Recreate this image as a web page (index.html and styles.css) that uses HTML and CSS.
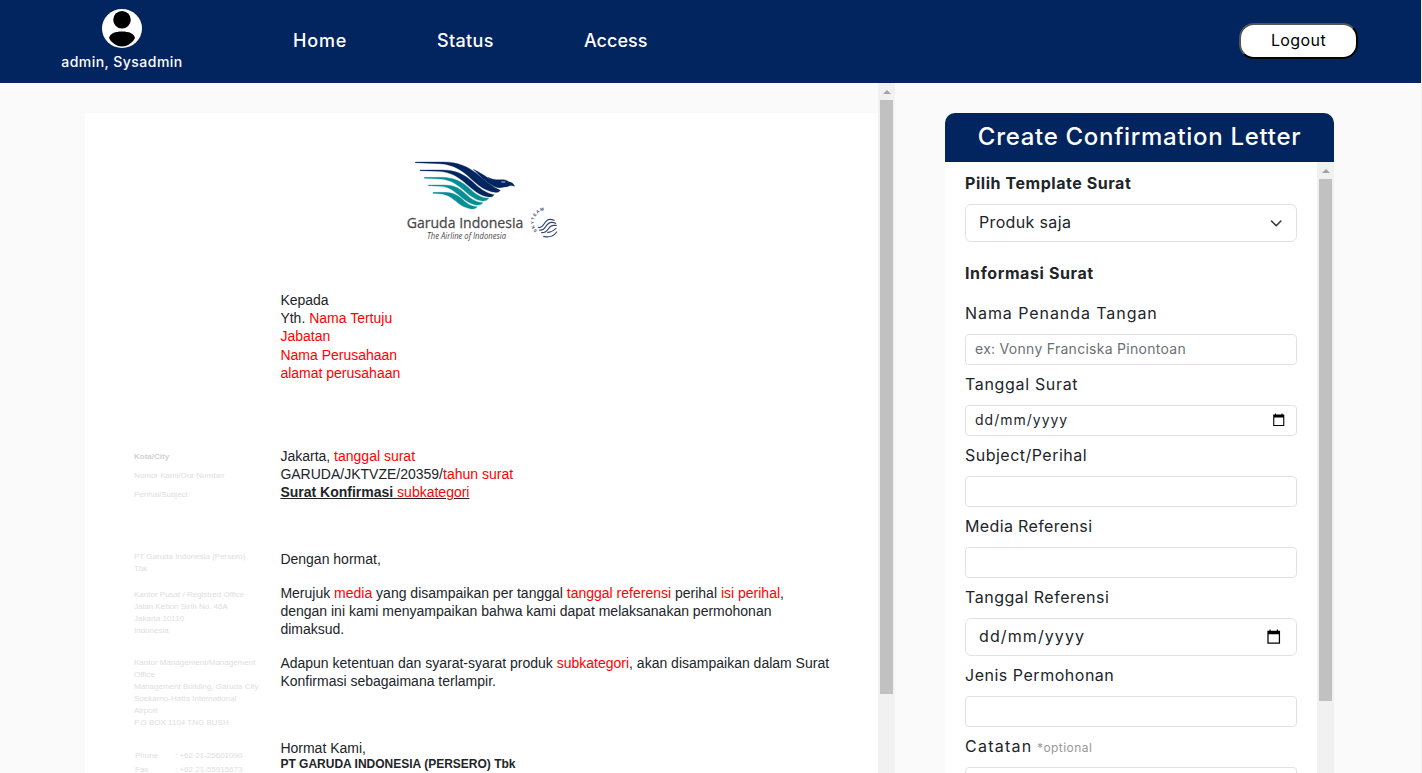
FILE: index.html
```html
<!DOCTYPE html>
<html lang="id">
<head>
<meta charset="utf-8">
<title>Create Confirmation Letter</title>
<link rel="stylesheet" href="styles.css">
</head>
<body>
<header class="navbar">
  <div class="user">
    <svg class="avatar" width="40" height="40" viewBox="0 0 40 40"><ellipse cx="20" cy="19.500" rx="20" ry="19.500" fill="#fff"/><circle cx="20" cy="10.700" r="8.800"/><path d="M7 29C8 24.500 13 22.500 20 22.500s12 2 13 6.500C30 34.500 25 37.500 20 37.500S10 34.500 7 29Z"/></svg>
    <span class="user-name">admin, Sysadmin</span>
  </div>
  <nav class="links"><a class="l-home">Home</a><a class="l-status">Status</a><a class="l-access">Access</a></nav>
  <button class="logout">Logout</button>
</header>
<main class="content">
  <section class="preview">
    <article class="paper">
      <svg class="logo" width="175" height="100" viewBox="0 0 525 300">
        <g transform="translate(45 16)">
          <g fill="#02245f" stroke="#02245f" stroke-linejoin="round">
            <path d="M16 20H100C143 20 174 34 199 54C225 76 247 95 271 105Q267 113 255 111C226 107 203 89 183 70C158 46 133 28 90 25L16 22Z"/>
            <path d="M30 44H95C138 44 163 58 185 77C207 98 227 114 252 118Q249 127 236 125C208 121 188 102 169 86C148 67 125 51 88 48L30 46Z"/>
            <path d="M190 42C210 52 228 63 246 77Q264 90 286 92Q278 99 264 97C235 90 215 66 190 42Z"/>
            <path d="M234 66Q244 72 257 73H281Q292 74 296 79Q309 80 314 93L307 91Q300 90 292 94Q279 97 265 93Q248 84 234 66Z"/>
          </g>
          <g fill="#078e94" stroke="#078e94" stroke-linejoin="round">
            <path d="M43 66H95C133 67 155 79 176 97C197 117 212 127 236 129Q230 139 217 137C193 134 176 117 158 102C136 83 118 73 90 71L43 69Z"/>
            <path d="M55 89H100C133 89 148 99 166 115C184 132 200 141 219 142Q213 151 200 149C176 146 160 130 146 119C126 102 112 95 95 93L55 91Z"/>
            <path d="M69 111H105C133 112 145 122 159 133C174 147 184 153 202 154Q195 163 181 160C160 157 148 146 134 135C118 122 108 118 95 116L69 114Z"/>
          </g>
          <path d="M274 80h12" stroke="#b8c2d4" stroke-width="3"/>
        </g>
        <text x="35" y="234" class="brand" textLength="350" lengthAdjust="spacingAndGlyphs">Garuda Indonesia</text>
        <text x="96" y="266" class="tagline" textLength="237" lengthAdjust="spacingAndGlyphs">The Airline of Indonesia</text>
        <path id="arc" d="M427 243A32 32 0 0 1 480 192" fill="none"/>
        <text class="skyteam"><textPath href="#arc" textLength="80">SKYTEAM</textPath></text>
        <g fill="none" stroke="#34466f" stroke-width="3.500" stroke-linecap="round">
          <path d="M430 232C447 238 447 208 464 208Q472 208 477 211"/>
          <path d="M433 240C454 245 450 217 470 217Q477 217 482 220"/>
          <path d="M440 248C462 250 457 226 476 226H484"/>
          <path d="M446 259Q470 266 485 246"/>
          <path d="M458 247Q470 247 483 235"/>
        </g>
      </svg>
      <div class="letter">
        <aside class="side">
          <div class="meta"><b>Kota/City</b><span>Nomor Kami/Our Number</span><span>Perihal/Subject</span></div>
          <p class="company">PT Garuda Indonesia (Persero)<br>Tbk</p>
          <p class="office">Kantor Pusat / Registred Office<br>Jalan Kebon Sirih No. 46A<br>Jakarta 10110<br>Indonesia</p>
          <p class="management">Kantor Management/Management<br>Office<br>Management Building, Garuda City<br>Soekarno-Hatta International<br>Airport<br>P.O BOX 1104 TNG BUSH</p>
          <div class="phones"><span>Phone</span><span>: +62 21-25601090</span><span>Fax</span><span>: +62 21-55915673</span></div>
        </aside>
        <div class="body">
          <p class="recipient">Kepada<br>Yth. <i>Nama Tertuju</i><br><i>Jabatan</i><br><i>Nama Perusahaan</i><br><i>alamat perusahaan</i></p>
          <p class="subject">Jakarta, <i>tanggal surat</i><br>GARUDA/JKTVZE/20359/<i>tahun surat</i><br><u><b>Surat Konfirmasi </b><i>subkategori</i></u></p>
          <p class="greeting">Dengan hormat,</p>
          <p class="para">Merujuk <i>media</i> yang disampaikan per tanggal <i>tanggal referensi</i> perihal <i>isi perihal</i>,<br>dengan ini kami menyampaikan bahwa kami dapat melaksanakan permohonan<br>dimaksud.</p>
          <p class="para">Adapun ketentuan dan syarat-syarat produk <i>subkategori</i>, akan disampaikan dalam Surat<br>Konfirmasi sebagaimana terlampir.</p>
          <p class="closing">Hormat Kami,<br><b class="signer">PT GARUDA INDONESIA (PERSERO) Tbk</b></p>
        </div>
      </div>
    </article>
    <div class="scrollbar"><span class="arrow"></span><span class="thumb thumb-preview"></span></div>
  </section>
  <section class="card">
    <h1 class="card-title"><span>Create Confirmation Letter</span></h1>
    <div class="card-body">
      <form class="form">
        <h2 class="h-template">Pilih Template Surat</h2>
        <div class="control large select"><span class="t-select">Produk saja</span><svg width="16" height="16" viewBox="0 0 16 16"><path d="M3.500 6l4.700 4.700 4.700-4.700" fill="none" stroke="#343a40" stroke-width="1.600" stroke-linecap="round" stroke-linejoin="round"/></svg></div>
        <h2 class="h-info">Informasi Surat</h2>
        <label class="t-signer">Nama Penanda Tangan</label>
        <div class="control"><span class="placeholder">ex: Vonny Franciska Pinontoan</span></div>
        <label class="t-date">Tanggal Surat</label>
        <div class="control"><span class="date-small">dd/mm/yyyy</span><svg width="14" height="14" viewBox="0 0 14 14"><path d="M3 .5h1v1h5.500v-1h1v1h1.800v11.500H1.200V1.500H3ZM2.300 4.500v7.400h8.900V4.500Z" fill-rule="evenodd"/></svg></div>
        <label class="t-subject">Subject/Perihal</label>
        <div class="control"></div>
        <label class="t-media">Media Referensi</label>
        <div class="control"></div>
        <label class="t-ref">Tanggal Referensi</label>
        <div class="control large"><span class="date-large">dd/mm/yyyy</span><svg width="16" height="16" viewBox="0 0 14 14"><path d="M3 .5h1v1h5.500v-1h1v1h1.800v11.500H1.200V1.500H3ZM2.300 4.500v7.400h8.900V4.500Z" fill-rule="evenodd"/></svg></div>
        <label class="t-type">Jenis Permohonan</label>
        <div class="control"></div>
        <label class="t-note"><span>Catatan</span> <small>*optional</small></label>
        <div class="control"></div>
      </form>
      <div class="scrollbar"><span class="arrow"></span><span class="thumb thumb-form"></span></div>
    </div>
  </section>
</main>
</body>
</html>
```
FILE: styles.css
```css
* { box-sizing: border-box; }
body { margin: 0; height: 773px; overflow: hidden; background: #fafafa; color: #212529; font: 16px/24px Inter, sans-serif; border-right: 1px solid #f0f0f0; }
p, h1, h2 { margin: 0; }
.navbar { height: 83px; background: #02245f; color: #fff; display: flex; align-items: center; padding: 0 64px 0 61px; }
.user { width: 122px; height: 83px; padding-top: 9px; display: flex; flex-direction: column; align-items: center; }
.avatar { flex: none; }
.user-name { font-size: 14px; line-height: 22px; margin-top: 2px; font-weight: 500; white-space: nowrap; letter-spacing: .46px; }
.links { display: flex; gap: 90px; margin-left: 110px; font-size: 18px; font-weight: 500; position: relative; top: -1px; }
.l-home { width: 54px; letter-spacing: .8px; }
.l-status { width: 57px; letter-spacing: .35px; }
.logout { margin: -2px -1px 0 auto; width: 119px; height: 36px; border: 2px outset #000; border-radius: 15px; background: #fff; color: #000; font: 16px Inter, sans-serif; letter-spacing: .4px; padding: 0 0 2px; }
.content { display: flex; height: 690px; }
.preview { width: 895px; display: flex; justify-content: flex-end; overflow: hidden; }
.paper { width: 793px; height: 690px; margin-top: 30px; background: #fff; }
.logo { display: block; margin: 37px 0 0 310px; }
.brand { font: 46px "Open Sans", sans-serif; fill: #4b4749; stroke: #4b4749; stroke-width: .8px; }
.tagline { font: italic 25px "Open Sans", sans-serif; fill: #4b4749; }
.skyteam { font: bold 13px "Liberation Sans", sans-serif; fill: #34466f; }
.scrollbar { width: 17px; flex: none; background: #f1f1f1; display: flex; flex-direction: column; align-items: center; }
.arrow { border: 4px solid transparent; border-top: 0; border-bottom: 4px solid #a3a3a3; margin: 7px 0 6px; }
.thumb { width: 13px; background: #c1c1c1; }
.thumb-preview { height: 594px; }
.thumb-form { height: 522px; }
.letter { display: flex; padding: 41px 0 0 49px; white-space: nowrap; font-family: "Liberation Sans", sans-serif; }
.side { width: 146.400px; padding-top: 156px; font-size: 8px; line-height: 12px; color: #dedede; }
.meta { display: flex; flex-direction: column; line-height: 19px; }
.meta b { color: #d2d2d2; }
.company { margin-top: 47px; }
.office { margin-top: 14px; }
.management { margin-top: 20px; }
.phones { display: grid; grid-template-columns: 40px auto; margin: 20px 0 0 1px; line-height: 14px; }
.body { font-size: 14px; line-height: 18.200px; }
.body i { font-style: normal; color: #f00; }
.subject { margin-top: 65px; }
.greeting { margin-top: 48px; }
.para { margin-top: 15.800px; }
.closing { margin-top: 48.400px; }
.closing .signer { font-size: 12px; line-height: 14px; display: block; }
.card { width: 389px; margin: 30px 0 0 50px; height: 660px; display: flex; flex-direction: column; }
.card-title { height: 49px; flex: none; border-radius: 10px 10px 0 0; background: #02245f; color: #fff; font-size: 24px; font-weight: 500; line-height: 48px; text-align: center; white-space: nowrap; letter-spacing: .7px; }
.card-body { flex: 1; min-height: 0; display: flex; background: #fff; }
.form { width: 372px; height: 611px; overflow: hidden; padding: 9px 20px 0; display: flex; flex-direction: column; white-space: nowrap; }
.form > * { flex: none; }
.form h2 { font-size: 16px; font-weight: 700; line-height: 24px; margin-bottom: 9px; letter-spacing: .55px; }
.form .h-info { margin: 19px 0 16px; letter-spacing: .6px; }
.form label { height: 24px; margin-bottom: 9px; font-weight: 370; }
.control { height: 31px; border: 1px solid #dee2e6; border-radius: 4px; margin-bottom: 7px; padding: 0 10px 1px 9px; display: flex; align-items: center; justify-content: space-between; font-size: 14px; font-weight: 370; }
.control span { margin-top: -1px; }
.control.large { height: 38px; border-radius: 6px; padding: 0 14px 1px 13px; font-size: 16px; }
.control.select { margin-bottom: 0; padding-right: 12px; }
.t-select { letter-spacing: .35px; }
.t-signer { letter-spacing: .93px; }
.t-date { letter-spacing: .67px; }
.t-subject { letter-spacing: .48px; }
.t-media { letter-spacing: .36px; }
.t-ref, .t-type { letter-spacing: .52px; }
.t-note span { letter-spacing: 1.250px; }
.date-small { letter-spacing: 1px; }
.date-large { letter-spacing: 1.100px; }
.placeholder { color: #6c7075; letter-spacing: .28px; }
small { font-size: 12px; line-height: 1; color: #999; letter-spacing: .45px; }
```
